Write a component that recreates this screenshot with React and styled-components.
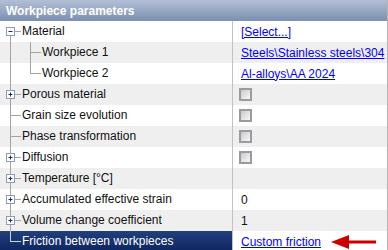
import { createGlobalStyle, styled } from "styled-components";

const GlobalStyle = createGlobalStyle`
  body {
    margin: 0;
    background: #ffffff;
    font-family: "Liberation Sans", Arial, sans-serif;
  }
`;

const rows = [
  { label: "Material", box: "minus", first: true, value: { link: "[Select...]" } },
  { label: "Workpiece 1", level: 1, value: { link: "Steels\\Stainless steels\\304" } },
  { label: "Workpiece 2", level: 1, last: true, value: { link: "Al-alloys\\AA 2024" } },
  { label: "Porous material", box: "plus", value: { check: true } },
  { label: "Grain size evolution", value: { check: true } },
  { label: "Phase transformation", value: { check: true } },
  { label: "Diffusion", box: "plus", value: { check: true } },
  { label: "Temperature [°C]", box: "plus", value: {} },
  { label: "Accumulated effective strain", box: "plus", value: { text: "0" } },
  { label: "Volume change coefficient", box: "plus", value: { text: "1" } },
  {
    label: "Friction between workpieces",
    last: true,
    selected: true,
    value: { link: "Custom friction", arrow: true },
  },
];

const Guides = ({ level = 0, box, first, last, selected }) => {
  const line = selected ? "#c9d2e6" : "#a3a3a3";
  const w = level === 0 ? 22 : 42;
  return (
    <svg width={w} height="21" viewBox={`0 0 ${w} 21`} style={{ flex: "none" }}>
      {level === 0 ? (
        <>
          <line x1="10.5" y1={first ? 10.5 : 0} x2="10.5" y2={last ? 10.5 : 21} stroke={line} />
          <line x1="10" y1="10.5" x2="21" y2="10.5" stroke={line} />
        </>
      ) : (
        <>
          <line x1="10.5" y1="0" x2="10.5" y2="21" stroke={line} />
          <line x1="30.5" y1="0" x2="30.5" y2={last ? 10.5 : 21} stroke={line} />
          <line x1="30" y1="10.5" x2="41" y2="10.5" stroke={line} />
        </>
      )}
      {box && (
        <>
          <rect x="6.5" y="6.5" width="8" height="8" fill="#ffffff" stroke="#8e9bb0" />
          <line x1="8.5" y1="10.5" x2="12.5" y2="10.5" stroke="#1c2c64" />
          {box === "plus" && <line x1="10.5" y1="8.5" x2="10.5" y2="12.5" stroke="#1c2c64" />}
        </>
      )}
    </svg>
  );
};

const Arrow = () => (
  <svg width="46" height="16" viewBox="0 0 46 16">
    <polygon points="0,8 18,1 18,15" fill="#cc0000" />
    <rect x="16" y="6.5" width="29" height="3" fill="#cc0000" />
  </svg>
);

const App = () => {
  return (
    <Panel>
      <GlobalStyle />
      <Header>Workpiece parameters</Header>
      {rows.map((r, i) => (
        <Row key={r.label} $alt={i % 2 === 1}>
          <NameCell $selected={r.selected}>
            <Guides {...r} />
            <Label>{r.label}</Label>
          </NameCell>
          <ValueCell>
            {r.value.link && <ValueLink href="#">{r.value.link}</ValueLink>}
            {r.value.text && <span>{r.value.text}</span>}
            {r.value.check && <Check />}
            {r.value.arrow && (
              <ArrowWrap>
                <Arrow />
              </ArrowWrap>
            )}
          </ValueCell>
        </Row>
      ))}
    </Panel>
  );
};

const Panel = styled.div`
  width: 388px;
  box-sizing: border-box;
  border-right: 1px solid #b4b4b4;
  font-size: 12px;
  color: #111111;
`;

const Header = styled.div`
  height: 21px;
  display: flex;
  align-items: center;
  padding-left: 6px;
  background: linear-gradient(#b2bfd6, #7c8fb2);
  color: #ffffff;
  font-weight: bold;
  font-size: 12px;
`;

const Row = styled.div`
  display: grid;
  grid-template-columns: 233px 1fr;
  height: 21px;
  background: ${(p) => (p.$alt ? "#efefef" : "#ffffff")};
`;

const NameCell = styled.div`
  display: flex;
  align-items: center;
  box-sizing: border-box;
  border-right: 1px solid #c2c2c2;
  background: ${(p) => (p.$selected ? "linear-gradient(#223f7c, #0d255f)" : "transparent")};
  color: ${(p) => (p.$selected ? "#ffffff" : "#111111")};
  white-space: nowrap;
  overflow: hidden;
`;

const Label = styled.span`
  line-height: 21px;
`;

const ValueCell = styled.div`
  display: flex;
  align-items: center;
  padding-left: 8px;
  background: inherit;
  white-space: nowrap;
`;

const ValueLink = styled.a`
  color: #0000ff;
  text-decoration: underline;
`;

const Check = styled.span`
  width: 13px;
  height: 13px;
  margin-left: -2px;
  box-sizing: border-box;
  border: 2px solid #9b9b9b;
  background: linear-gradient(135deg, #c6cad0, #f8f8f8);
`;

const ArrowWrap = styled.span`
  display: flex;
  margin-left: 10px;
`;

export default App;
